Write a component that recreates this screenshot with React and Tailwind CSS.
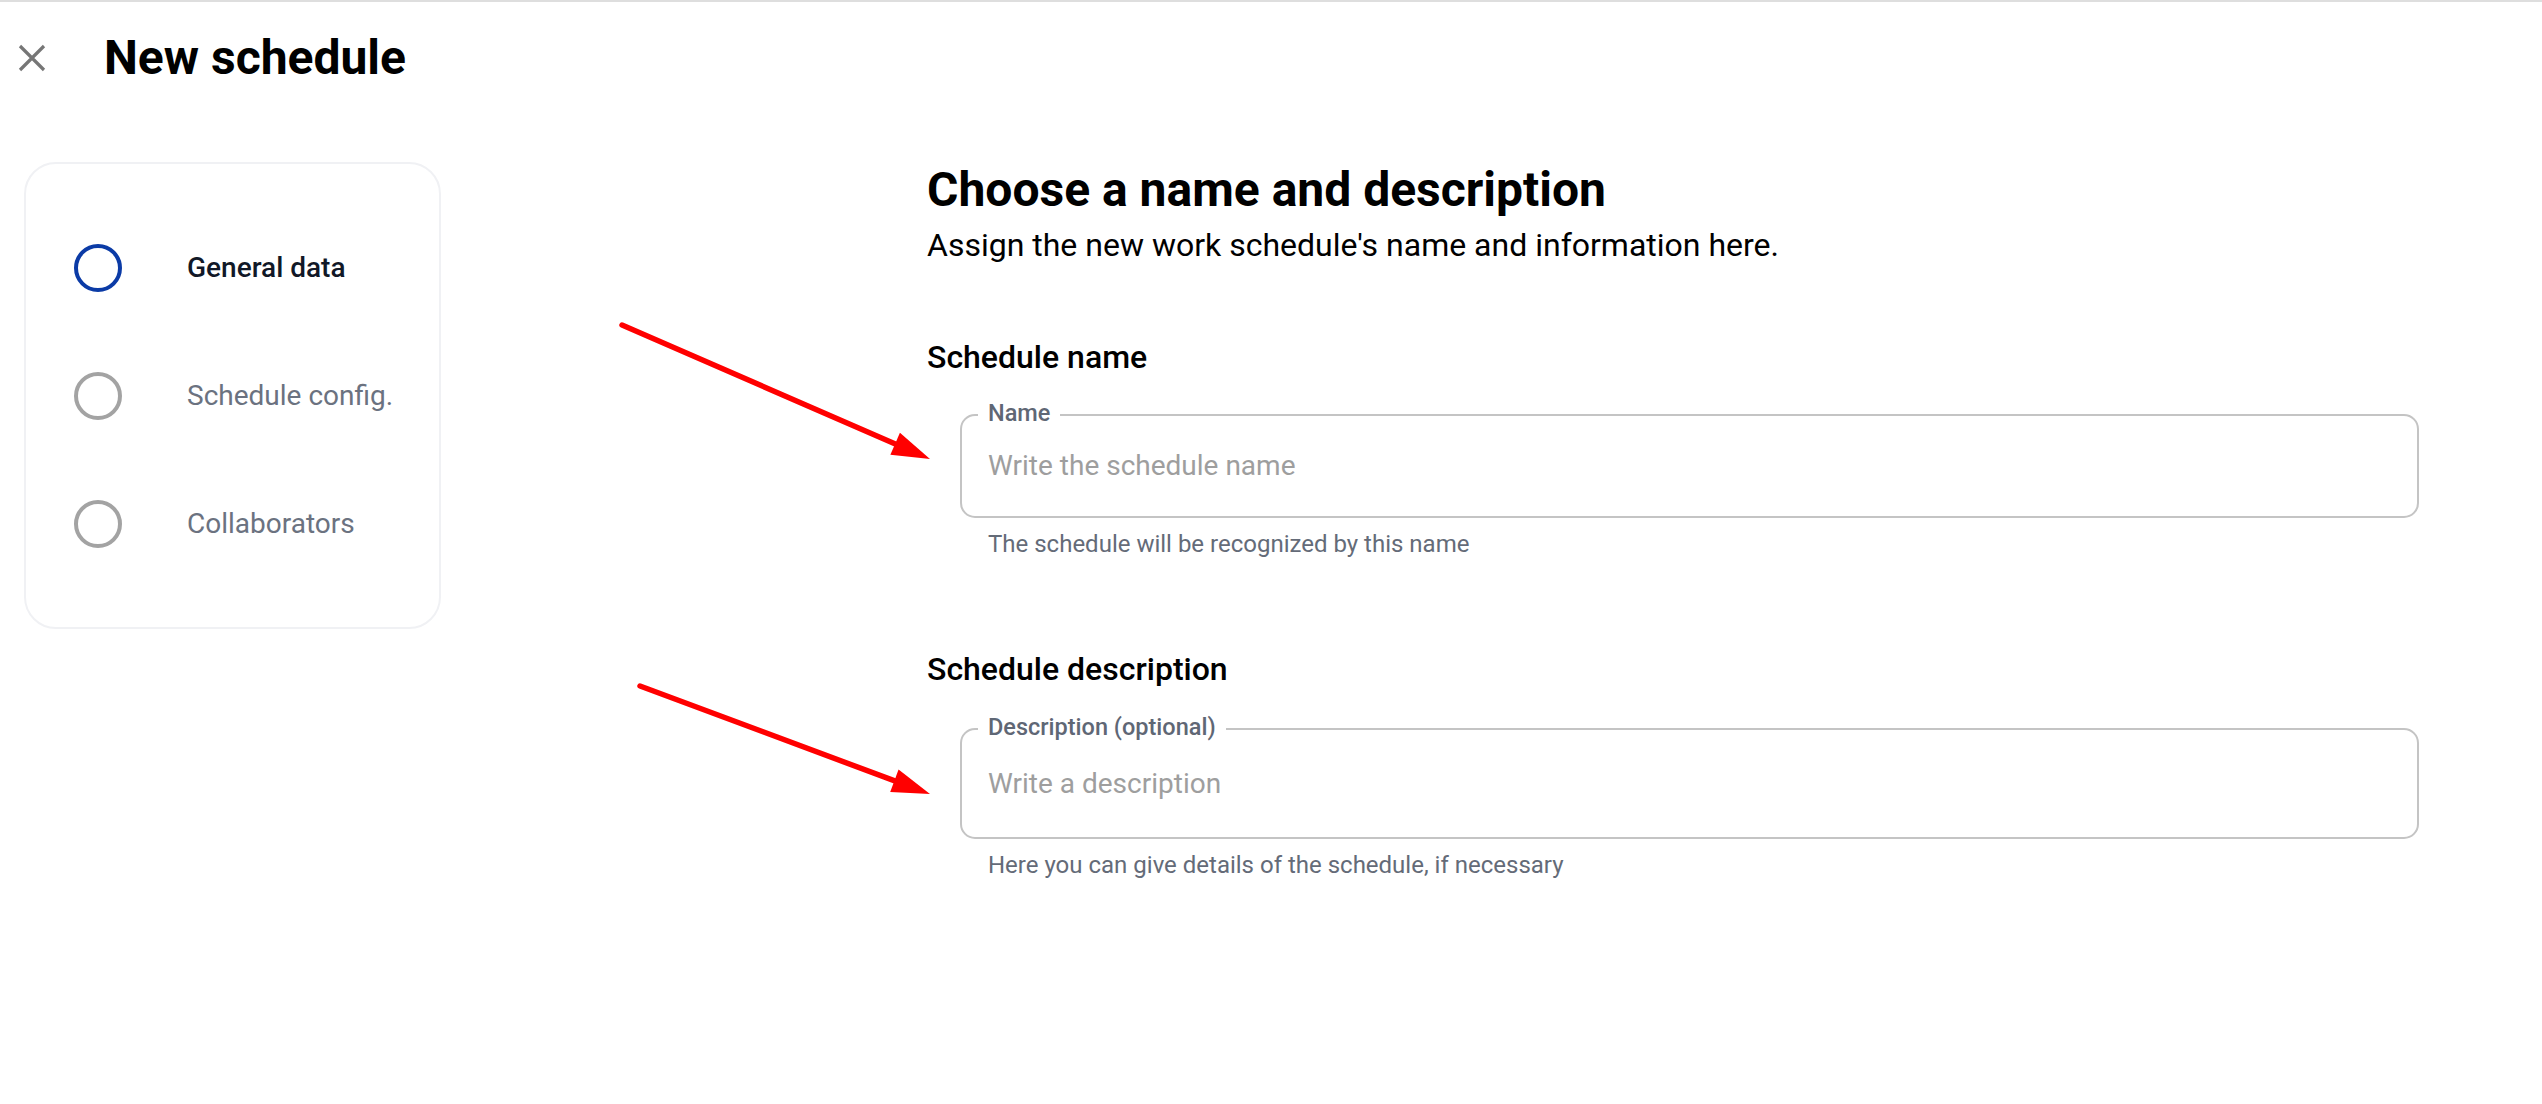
import { useState } from 'react';

const steps = [
  { id: 'general', label: 'General data' },
  { id: 'config', label: 'Schedule config.' },
  { id: 'collab', label: 'Collaborators' },
];

// red annotation arrow, drawn from start point to tip
const Arrow = ({ x1, y1, x2, y2 }) => {
  const dx = x2 - x1;
  const dy = y2 - y1;
  const len = Math.hypot(dx, dy);
  const ux = dx / len;
  const uy = dy / len;
  const head = 38;
  const half = 12;
  const bx = x2 - ux * head;
  const by = y2 - uy * head;
  const pts = `${x2},${y2} ${bx - uy * half},${by + ux * half} ${bx + uy * half},${by - ux * half}`;
  return (
    <g>
      <line x1={x1} y1={y1} x2={bx + ux * 4} y2={by + uy * 4} stroke="#ff0000" strokeWidth="5.5" strokeLinecap="round" />
      <polygon points={pts} fill="#ff0000" />
    </g>
  );
};

const OutlinedField = ({ label, placeholder, helper, height, multiline }) => {
  const [value, setValue] = useState('');
  return (
    <div className="ml-[33px] w-[1459px]">
      <div className={`relative border-2 border-[#c4c4c4] rounded-[15px] flex items-center ${height}`}>
        <span className="absolute left-[16px] top-[-3px] -translate-y-1/2 bg-white px-[10px] text-[23.5px] leading-[28px] font-medium text-[#5f6775]">
          {label}
        </span>
        {multiline ? (
          <textarea
            rows={1}
            value={value}
            onChange={(e) => setValue(e.target.value)}
            placeholder={placeholder}
            className="w-full resize-none bg-transparent pl-[26px] pr-6 text-[28px] leading-[34px] text-gray-900 outline-none placeholder:text-[#9e9e9e]"
          />
        ) : (
          <input
            value={value}
            onChange={(e) => setValue(e.target.value)}
            placeholder={placeholder}
            className="w-full bg-transparent pl-[26px] pr-6 text-[28px] leading-[34px] text-gray-900 outline-none placeholder:text-[#9e9e9e]"
          />
        )}
      </div>
      <p className="mt-[13px] pl-[28px] text-[24px] leading-[26px] text-[#646b78]">{helper}</p>
    </div>
  );
};

const App = () => {
  const [active] = useState('general');

  return (
    <div className="relative min-h-screen w-full bg-white border-t-2 border-[#dedede] font-['Roboto','Liberation_Sans',sans-serif] text-black">
      {/* Header */}
      <header className="h-[112px] flex items-center pl-[18px]">
        <button className="w-[28px] h-[28px] flex items-center justify-center text-[#767676]">
          <svg viewBox="0 0 28 28" className="w-[28px] h-[28px]">
            <path d="M2 2 L26 26 M26 2 L2 26" stroke="currentColor" strokeWidth="3.2" />
          </svg>
        </button>
        <h1 className="ml-[58px] text-[48px] leading-[56px] font-bold">New schedule</h1>
      </header>

      <div className="flex mt-[48px]">
        {/* Steps */}
        <aside className="ml-[24px] w-[417px] h-[467px] shrink-0 border-2 border-[#f0f1f4] rounded-[32px] py-[40px] pl-[48px]">
          {steps.map((step) => {
            const isActive = step.id === active;
            return (
              <div key={step.id} className="h-[128px] flex items-center">
                <span
                  className={`w-[48px] h-[48px] rounded-full border-[4px] shrink-0 ${
                    isActive ? 'border-[#0b3ba6]' : 'border-[#a3a3a3]'
                  }`}
                />
                <span
                  className={`ml-[65px] text-[28px] leading-[32px] ${
                    isActive ? 'font-medium text-[#111827]' : 'text-[#6b7280]'
                  }`}
                >
                  {step.label}
                </span>
              </div>
            );
          })}
        </aside>

        {/* Form */}
        <main className="ml-[486px] w-[1492px]">
          <h2 className="text-[48px] leading-[56px] font-bold">Choose a name and description</h2>
          <p className="mt-[9px] text-[32px] leading-[36px]">
            Assign the new work schedule's name and information here.
          </p>

          <h3 className="mt-[77px] text-[32px] leading-[34px] font-medium">Schedule name</h3>
          <div className="mt-[40px]">
            <OutlinedField
              label="Name"
              placeholder="Write the schedule name"
              helper="The schedule will be recognized by this name"
              height="h-[104px]"
            />
          </div>

          <h3 className="mt-[95px] text-[32px] leading-[34px] font-medium">Schedule description</h3>
          <div className="mt-[42px]">
            <OutlinedField
              label="Description (optional)"
              placeholder="Write a description"
              helper="Here you can give details of the schedule, if necessary"
              height="h-[111px]"
              multiline
            />
          </div>
        </main>
      </div>

      {/* Annotation arrows */}
      <svg className="absolute left-0 top-0 w-[2542px] h-[1104px] pointer-events-none" viewBox="0 0 2542 1104">
        <Arrow x1={622} y1={323} x2={930} y2={457} />
        <Arrow x1={640} y1={684} x2={930} y2={792} />
      </svg>
    </div>
  );
};

export default App;
